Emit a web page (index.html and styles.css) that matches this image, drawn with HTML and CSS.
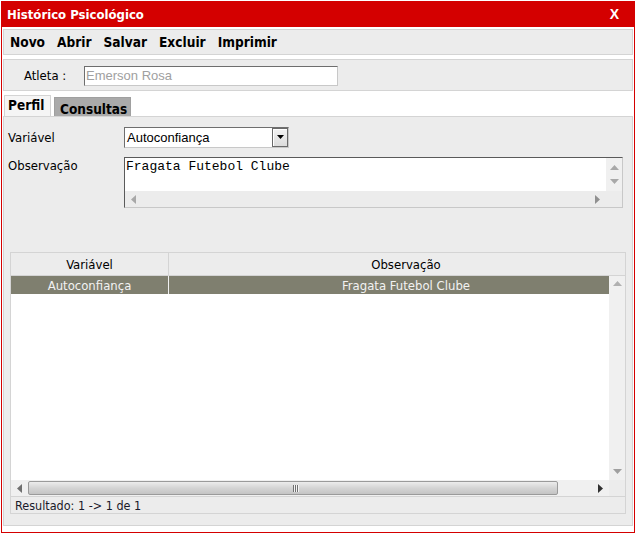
FILE: index.html
```html
<!DOCTYPE html>
<html lang="pt">
<head>
<meta charset="utf-8">
<title>Histórico Psicológico</title>
<link rel="stylesheet" href="styles.css">
</head>
<body>
<div class="window">
  <div class="titlebar">
    <span class="title">Histórico Psicológico</span>
    <span class="close">X</span>
  </div>
  <div class="toolbar">
    <span class="tool">Novo</span>
    <span class="tool">Abrir</span>
    <span class="tool">Salvar</span>
    <span class="tool">Excluir</span>
    <span class="tool">Imprimir</span>
  </div>
  <div class="athlete">
    <span class="athlete-label">Atleta :</span>
    <div class="input">Emerson Rosa</div>
  </div>
  <div class="tabs">
    <div class="tab active">Perfil</div>
    <div class="tab">Consultas</div>
  </div>
  <div class="panel">
    <div class="form-row">
      <span class="lbl">Variável</span>
      <div class="select">
        <span class="select-text">Autoconfiança</span>
        <span class="select-btn"><svg width="9" height="5" viewBox="0 0 9 5"><path d="M1 0h7L4.5 4z" fill="#000"/></svg></span>
      </div>
    </div>
    <div class="form-row obs-row">
      <span class="lbl">Observação</span>
      <div class="textarea">
        <div class="ta-main">
          <div class="ta-text">Fragata Futebol Clube</div>
          <div class="ta-vscroll">
            <svg width="9" height="5" viewBox="0 0 9 5"><path d="M4.5 0L9 5H0z" fill="#a8a8a8"/></svg>
            <svg width="9" height="5" viewBox="0 0 9 5"><path d="M0 0h9L4.5 5z" fill="#a8a8a8"/></svg>
          </div>
        </div>
        <div class="ta-hscroll">
          <svg width="5" height="9" viewBox="0 0 5 9"><path d="M5 0v9L0 4.5z" fill="#a8a8a8"/></svg>
          <svg width="5" height="9" viewBox="0 0 5 9"><path d="M0 0v9L5 4.5z" fill="#909090"/></svg>
        </div>
      </div>
    </div>
    <div class="grid">
      <div class="grid-header">
        <div class="cell c1">Variável</div>
        <div class="cell c2">Observação</div>
      </div>
      <div class="grid-body">
        <div class="grid-data">
          <div class="grid-row selected">
            <div class="cell c1">Autoconfiança</div>
            <div class="cell c2">Fragata Futebol Clube</div>
          </div>
        </div>
        <div class="vscroll">
          <svg width="9" height="5" viewBox="0 0 9 5"><path d="M4.5 0L9 5H0z" fill="#b0b0b0"/></svg>
          <svg width="9" height="5" viewBox="0 0 9 5"><path d="M0 0h9L4.5 5z" fill="#a0a0a0"/></svg>
        </div>
      </div>
      <div class="hscroll">
        <div class="hs-track">
          <span class="hs-arrow"><svg width="5" height="9" viewBox="0 0 5 9"><path d="M5 0v9L0 4.5z" fill="#707070"/></svg></span>
          <div class="hs-thumb"><span class="grip"><i></i><i></i><i></i></span></div>
          <span class="hs-arrow right"><svg width="5" height="9" viewBox="0 0 5 9"><path d="M0 0v9L5 4.5z" fill="#303030"/></svg></span>
        </div>
        <div class="hs-corner"></div>
      </div>
      <div class="grid-footer">Resultado: 1 -&gt; 1 de 1</div>
    </div>
  </div>
</div>
</body>
</html>
```

FILE: styles.css
```css
* { box-sizing: border-box; }

body {
  margin: 0;
  background: #ffffff;
  font-family: "DejaVu Sans Condensed", "DejaVu Sans", sans-serif;
  font-stretch: condensed;
  font-size: 12px;
  color: #000;
}

.window {
  margin: 1px 0 0 1px;
  width: 634px;
  height: 532px;
  border: 1px solid #d40000;
  border-top: none;
  background: #ffffff;
  display: flex;
  flex-direction: column;
}

.titlebar {
  height: 26px;
  background: #d40000;
  color: #ffffff;
  display: flex;
  align-items: center;
  justify-content: space-between;
  padding: 0 15px 0 5px;
  font-weight: bold;
  font-size: 13px;
}

.close {
  font-family: "Liberation Sans", Arial, sans-serif;
  font-weight: bold;
  font-size: 14px;
}

.toolbar {
  margin: 2px 1px 0 1px;
  height: 26px;
  background: #ececec;
  border: 1px solid #d4d4d4;
  display: flex;
  align-items: center;
  gap: 12px;
  padding-left: 6px;
  font-weight: bold;
  font-size: 13.6px;
}

.athlete {
  margin: 4px 1px 0 1px;
  height: 32px;
  background: #ececec;
  border: 1px solid #d4d4d4;
  display: flex;
  align-items: center;
  padding-left: 20px;
  font-size: 13px;
}

.athlete-label {
  width: 60px;
}

.input {
  width: 254px;
  height: 20px;
  background: #ffffff;
  border: 1px solid #c8c8c8;
  border-top-color: #6e6e6e;
  border-left-color: #6e6e6e;
  font-family: "Liberation Sans", Arial, sans-serif;
  font-stretch: normal;
  font-size: 13px;
  color: #a0a0a0;
  padding-left: 1px;
  line-height: 18px;
  margin-top: 1px;
}

.tabs {
  height: 25px;
  display: flex;
  align-items: flex-end;
  gap: 3px;
  padding-left: 2px;
  font-weight: bold;
  font-size: 13.5px;
}

.tab {
  height: 19px;
  width: 77px;
  background: #aaaaaa;
  border: 1px solid #a0a0a0;
  border-bottom: none;
  padding: 4px 0 0 5px;
  line-height: 14px;
}

.tab.active {
  height: 21px;
  width: 47px;
  background: #f5f5f5;
  border-color: #d4d4d4;
  padding: 2px 0 0 3px;
}

.panel {
  margin: 0 1px;
  height: 410px;
  background: #ececec;
  border: 1px solid #d4d4d4;
  padding: 10px 0 0 0;
  font-size: 13px;
}

.form-row {
  display: flex;
  align-items: center;
}

.obs-row {
  align-items: flex-start;
  margin-top: 9px;
}

.lbl {
  width: 120px;
  padding-left: 4px;
}

.obs-row .lbl {
  padding-top: 1px;
}

.select {
  width: 165px;
  height: 21px;
  background: #ffffff;
  border: 1px solid #c8c8c8;
  border-top-color: #6e6e6e;
  border-left-color: #6e6e6e;
  display: flex;
  align-items: center;
  justify-content: space-between;
  font-family: "Liberation Sans", Arial, sans-serif;
  font-stretch: normal;
  font-size: 13px;
}

.select-text {
  padding-left: 2px;
}

.select-btn {
  width: 16px;
  height: 19px;
  background: linear-gradient(#f2f2f2, #dcdcdc);
  border: 1px solid #6a6a6a;
  box-shadow: inset 1px 1px 0 #ffffff;
  display: flex;
  align-items: center;
  justify-content: center;
}

.textarea {
  width: 499px;
  height: 51px;
  background: #ececec;
  border: 1px solid #c8c8c8;
  border-top-color: #5a5a5a;
  border-left-color: #5a5a5a;
  display: flex;
  flex-direction: column;
}

.ta-main {
  flex: 1;
  display: flex;
}

.ta-text {
  flex: 1;
  background: #ffffff;
  font-family: "Liberation Mono", "Courier New", monospace;
  font-stretch: normal;
  font-size: 13px;
  padding: 1px 0 0 1px;
  line-height: 15px;
}

.ta-vscroll {
  width: 16px;
  background: #f0f0f0;
  display: flex;
  flex-direction: column;
  align-items: center;
  justify-content: space-around;
  padding: 3px 0;
}

.ta-hscroll {
  height: 16px;
  display: flex;
  align-items: center;
  justify-content: space-between;
  padding: 0 22px 0 6px;
}

.grid {
  margin: 44px 0 0 6px;
  width: 616px;
  height: 262px;
  background: #ececec;
  border: 1px solid #d4d4d4;
  display: flex;
  flex-direction: column;
  font-size: 13px;
  overflow: hidden;
}

.grid-header {
  height: 23px;
  display: flex;
  border-bottom: 1px solid #d4d4d4;
}

.cell {
  flex: none;
  display: flex;
  align-items: center;
  justify-content: center;
  white-space: nowrap;
}

.c1 {
  width: 158px;
  border-right: 1px solid #d4d4d4;
}

.c2 {
  width: 474px;
}

.grid-body {
  height: 204px;
  display: flex;
  background: #ffffff;
}

.grid-data {
  flex: 1;
  overflow: hidden;
}

.grid-row {
  height: 18px;
  display: flex;
}

.grid-row.selected {
  background: #7f7f6f;
  color: #f2f2f2;
}

.grid-row.selected .c1 {
  border-right-color: #f0f0f0;
}

.vscroll {
  width: 16px;
  background: #f0f0f0;
  display: flex;
  flex-direction: column;
  align-items: center;
  justify-content: space-between;
  padding: 5px 0 6px 0;
}

.hscroll {
  height: 16px;
  display: flex;
  background: #f0f0f0;
}

.hs-track {
  flex: 1;
  display: flex;
  align-items: center;
}

.hs-arrow {
  width: 17px;
  display: flex;
  justify-content: center;
}

.hs-arrow.right {
  width: 51px;
  justify-content: flex-end;
  padding-right: 6px;
}

.hs-thumb {
  flex: 1;
  height: 14px;
  border: 1px solid #9a9a9a;
  border-radius: 2px;
  background: linear-gradient(#ececec, #d4d4d4 50%, #c4c4c4);
  display: flex;
  align-items: center;
  justify-content: center;
}

.grip {
  display: flex;
  gap: 1px;
  margin-left: 4px;
}

.grip i {
  display: block;
  width: 1px;
  height: 7px;
  background: #707070;
  box-shadow: 1px 0 0 #f4f4f4;
}

.hs-corner {
  width: 16px;
  background: #ececec;
}

.grid-footer {
  flex: 1;
  border-top: 1px solid #d4d4d4;
  padding-left: 4px;
  display: flex;
  align-items: center;
  color: #1a1a2a;
  font-size: 12.5px;
}
```
